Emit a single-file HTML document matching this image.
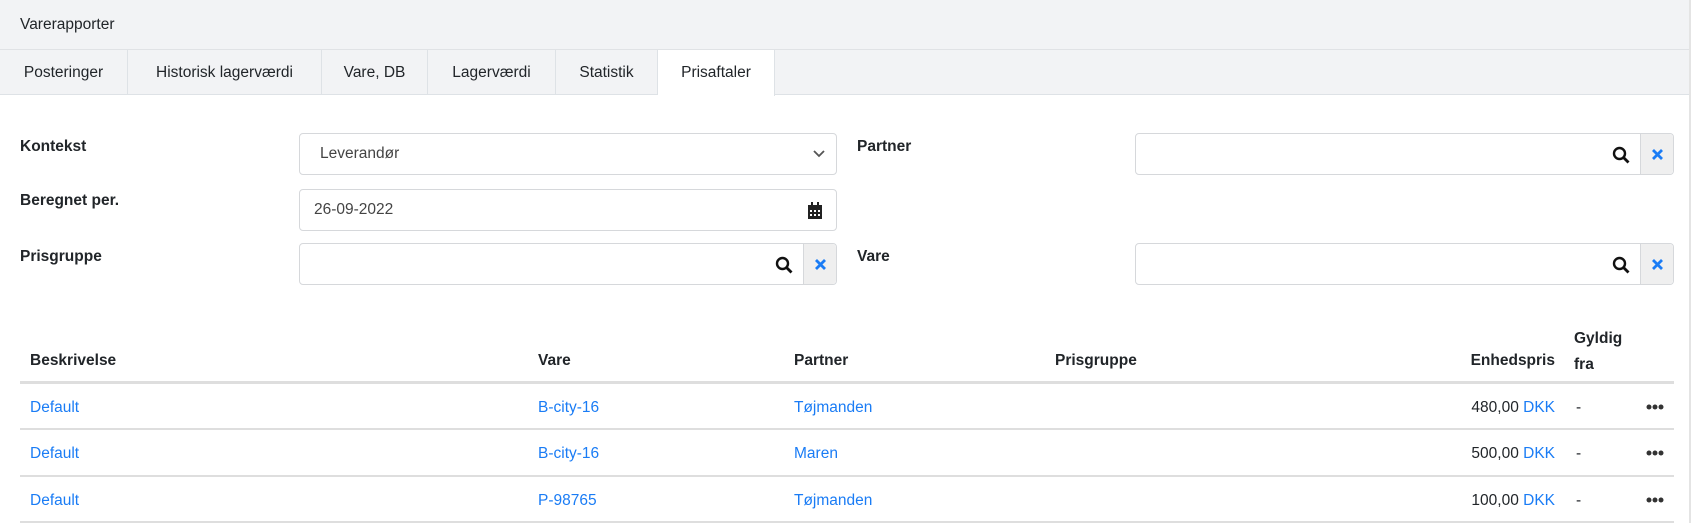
<!DOCTYPE html>
<html><head><meta charset="utf-8"><style>
*{box-sizing:border-box;margin:0;padding:0}
body{width:1693px;height:523px;overflow:hidden;background:#fff;font-family:"Liberation Sans",sans-serif;font-size:15.5px;color:#212529;position:relative}
.abs{position:absolute}
.hdr{left:0;top:0;width:1690px;height:50px;background:#f2f3f5;border-bottom:1px solid #e0e2e5}
.tabs{left:0;top:50px;width:1690px;height:45px;background:#f2f3f5;border-bottom:1px solid #dee2e6}
.tab{position:absolute;top:0;height:45px;line-height:45px;border-right:1px solid #dee2e6;text-align:center}
.vline{left:1689px;top:0;width:2px;height:523px;background:#e4e4e4}
.lbl{font-weight:bold}
.box{border:1px solid #d6d8db;border-radius:4px;background:#fff}
.xb{position:absolute;right:0;top:0;bottom:0;width:33px;background:#efefef;border-left:1px solid #d6d8db;border-radius:0 4px 4px 0}
.link{color:#1a7cf5}
.rb{left:20px;width:1654px;height:2px;background:#dedede}
</style></head><body>
<div class="abs hdr"></div>
<div class="abs" style="left:20px;top:16px">Varerapporter</div>
<div class="abs tabs">
<div class="tab" style="left:0;width:128px">Posteringer</div>
<div class="tab" style="left:128px;width:194px">Historisk lagerværdi</div>
<div class="tab" style="left:322px;width:106px">Vare, DB</div>
<div class="tab" style="left:428px;width:128px">Lagerværdi</div>
<div class="tab" style="left:556px;width:102px">Statistik</div>
<div class="tab" style="left:658px;width:117px;background:#fff;height:46px">Prisaftaler</div>
</div>
<div class="abs vline"></div>

<div class="abs lbl" style="left:20px;top:138px">Kontekst</div>
<div class="abs lbl" style="left:20px;top:192px">Beregnet per.</div>
<div class="abs lbl" style="left:20px;top:248px">Prisgruppe</div>
<div class="abs lbl" style="left:857px;top:138px">Partner</div>
<div class="abs lbl" style="left:857px;top:248px">Vare</div>

<div class="abs box" style="left:299px;top:133px;width:538px;height:42px">
<span class="abs" style="left:20px;top:11px;color:#444">Leverandør</span>
<svg class="abs" style="right:10px;top:15px" width="14" height="10" viewBox="0 0 14 10"><path d="M2 2l5 5 5-5" stroke="#555" stroke-width="1.8" fill="none"/></svg>
</div>
<div class="abs box" style="left:299px;top:189px;width:538px;height:42px">
<span class="abs" style="left:14px;top:11px;color:#444">26-09-2022</span>
<svg class="abs" style="right:13px;top:12px" width="16" height="18" viewBox="0 0 16 18"><rect x="4" y="0" width="2" height="4" fill="#222"/><rect x="10" y="0" width="2" height="4" fill="#222"/><rect x="1" y="3" width="14" height="3" fill="#222"/><rect x="1" y="6" width="14" height="11" fill="#222"/><g fill="#fff"><rect x="3" y="8" width="2" height="2"/><rect x="7" y="8" width="2" height="2"/><rect x="11" y="8" width="2" height="2"/><rect x="3" y="12" width="2" height="2"/><rect x="7" y="12" width="2" height="2"/><rect x="11" y="12" width="2" height="2"/></g></svg>
</div>

<div class="abs box" style="left:299px;top:243px;width:538px;height:42px">
<svg class="abs" style="right:43px;top:12px" width="18" height="18" viewBox="0 0 18 18"><circle cx="7.5" cy="7.5" r="5.5" stroke="#111" stroke-width="2.4" fill="none"/><path d="M11.5 11.5l5 5" stroke="#111" stroke-width="2.8"/></svg>
<div class="xb"><svg class="abs" style="left:10px;top:14px" width="13" height="13" viewBox="0 0 13 13"><path d="M2 2l9 9M11 2l-9 9" stroke="#1a7cf5" stroke-width="2.8"/></svg></div>
</div>
<div class="abs box" style="left:1135px;top:133px;width:539px;height:42px">
<svg class="abs" style="right:43px;top:12px" width="18" height="18" viewBox="0 0 18 18"><circle cx="7.5" cy="7.5" r="5.5" stroke="#111" stroke-width="2.4" fill="none"/><path d="M11.5 11.5l5 5" stroke="#111" stroke-width="2.8"/></svg>
<div class="xb"><svg class="abs" style="left:10px;top:14px" width="13" height="13" viewBox="0 0 13 13"><path d="M2 2l9 9M11 2l-9 9" stroke="#1a7cf5" stroke-width="2.8"/></svg></div>
</div>
<div class="abs box" style="left:1135px;top:243px;width:539px;height:42px">
<svg class="abs" style="right:43px;top:12px" width="18" height="18" viewBox="0 0 18 18"><circle cx="7.5" cy="7.5" r="5.5" stroke="#111" stroke-width="2.4" fill="none"/><path d="M11.5 11.5l5 5" stroke="#111" stroke-width="2.8"/></svg>
<div class="xb"><svg class="abs" style="left:10px;top:14px" width="13" height="13" viewBox="0 0 13 13"><path d="M2 2l9 9M11 2l-9 9" stroke="#1a7cf5" stroke-width="2.8"/></svg></div>
</div>

<div class="abs lbl" style="left:30px;top:352px">Beskrivelse</div>
<div class="abs lbl" style="left:538px;top:352px">Vare</div>
<div class="abs lbl" style="left:794px;top:352px">Partner</div>
<div class="abs lbl" style="left:1055px;top:352px">Prisgruppe</div>
<div class="abs lbl" style="left:1455px;top:352px;width:100px;text-align:right">Enhedspris</div>
<div class="abs lbl" style="left:1574px;top:326px;line-height:26px">Gyldig<br>fra</div>
<div class="abs rb" style="top:381px;height:3px"></div>

<div class="abs link" style="left:30px;top:399px">Default</div>
<div class="abs link" style="left:538px;top:399px">B-city-16</div>
<div class="abs link" style="left:794px;top:399px">Tøjmanden</div>
<div class="abs" style="left:1400px;top:399px;width:155px;text-align:right">480,00 <span class="link">DKK</span></div>
<div class="abs" style="left:1576px;top:399px">-</div>
<svg class="abs" style="left:1646px;top:404px" width="18" height="6"><circle cx="3" cy="3" r="2.5" fill="#333"/><circle cx="9" cy="3" r="2.5" fill="#333"/><circle cx="15" cy="3" r="2.5" fill="#333"/></svg>
<div class="abs rb" style="top:428px"></div>

<div class="abs link" style="left:30px;top:445px">Default</div>
<div class="abs link" style="left:538px;top:445px">B-city-16</div>
<div class="abs link" style="left:794px;top:445px">Maren</div>
<div class="abs" style="left:1400px;top:445px;width:155px;text-align:right">500,00 <span class="link">DKK</span></div>
<div class="abs" style="left:1576px;top:445px">-</div>
<svg class="abs" style="left:1646px;top:450px" width="18" height="6"><circle cx="3" cy="3" r="2.5" fill="#333"/><circle cx="9" cy="3" r="2.5" fill="#333"/><circle cx="15" cy="3" r="2.5" fill="#333"/></svg>
<div class="abs rb" style="top:475px"></div>

<div class="abs link" style="left:30px;top:492px">Default</div>
<div class="abs link" style="left:538px;top:492px">P-98765</div>
<div class="abs link" style="left:794px;top:492px">Tøjmanden</div>
<div class="abs" style="left:1400px;top:492px;width:155px;text-align:right">100,00 <span class="link">DKK</span></div>
<div class="abs" style="left:1576px;top:492px">-</div>
<svg class="abs" style="left:1646px;top:497px" width="18" height="6"><circle cx="3" cy="3" r="2.5" fill="#333"/><circle cx="9" cy="3" r="2.5" fill="#333"/><circle cx="15" cy="3" r="2.5" fill="#333"/></svg>
<div class="abs rb" style="top:521px"></div>
</body></html>
